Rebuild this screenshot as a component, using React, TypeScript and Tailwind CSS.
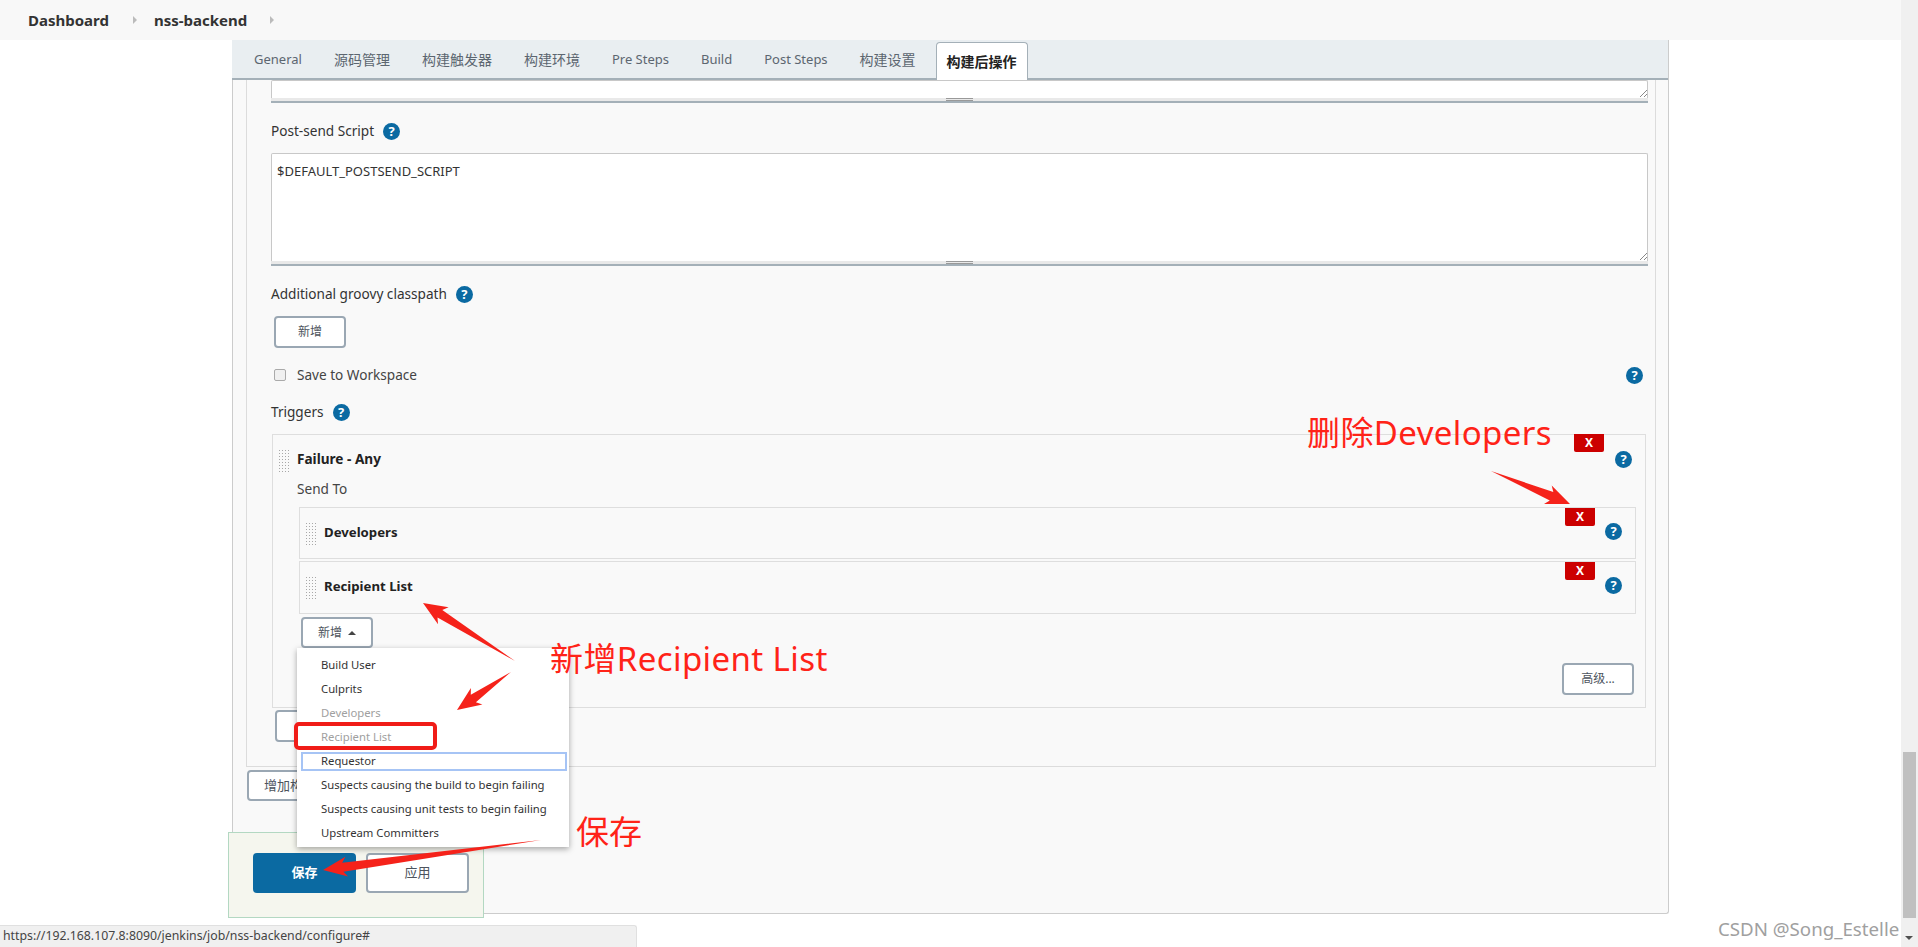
import React from "react";

const tabs = ["General", "源码管理", "构建触发器", "构建环境", "Pre Steps", "Build", "Post Steps", "构建设置"];

const menuItems = [
  { label: "Build User" },
  { label: "Culprits" },
  { label: "Developers", disabled: true },
  { label: "Recipient List", disabled: true },
  { label: "Requestor", focused: true },
  { label: "Suspects causing the build to begin failing" },
  { label: "Suspects causing unit tests to begin failing" },
  { label: "Upstream Committers" },
];

// tail -> tip arrow with a swept head, like the ones drawn on the screenshot
const arrowPoints = (x1: number, y1: number, x2: number, y2: number) => {
  const d = Math.hypot(x2 - x1, y2 - y1);
  const ux = (x2 - x1) / d;
  const uy = (y2 - y1) / d;
  const at = (along: number, side: number) =>
    `${(x1 + ux * along - uy * side).toFixed(1)},${(y1 + uy * along + ux * side).toFixed(1)}`;
  return [at(0, 0), at(d - 20, 4.5), at(d - 24, 10), at(d, 0), at(d - 24, -10), at(d - 20, -4.5)].join(" ");
};

const Help = ({ className = "" }: { className?: string }) => (
  <span
    className={`flex h-[17px] w-[17px] shrink-0 items-center justify-center rounded-full bg-[#0b6aa2] text-[13px] leading-none font-bold text-white ${className}`}
  >
    ?
  </span>
);

const Grip = () => <div className="h-[23px] w-[11px] shrink-0 bg-[radial-gradient(#a8a8a8_1px,transparent_1px)] bg-[length:3px_3px]" />;

const DeleteButton = ({ className }: { className: string }) => (
  <button className={`absolute flex h-[18px] w-[30px] items-center justify-center rounded-b-[2px] bg-[#cc0000] text-[12px] leading-none font-bold text-white ${className}`}>
    X
  </button>
);

const Button = ({ children, className }: { children: React.ReactNode; className: string }) => (
  <button className={`flex items-center justify-center rounded-[4px] border-2 border-[#9aa7b3] bg-white text-[12px] text-[#4d545d] ${className}`}>
    {children}
  </button>
);

const ScriptBox = ({ text, className }: { text?: string; className: string }) => (
  <div className="relative">
    <div className={`rounded-t-[2px] border border-b-0 border-[#c8c8c8] bg-white px-[5px] pt-[7px] text-[13px] leading-5 text-[#333] ${className}`}>
      {text}
    </div>
    <div className="flex h-[5px] items-center justify-center border-b-2 border-[#a4b0b8] bg-[#e9e9e9]">
      <div className="h-[3px] w-[27px] border-y border-[#999]" />
    </div>
    <svg className="absolute right-[1px] bottom-[6px] h-2 w-2" viewBox="0 0 8 8">
      <path d="M1 8 8 1M5 8 8 5" stroke="#888" strokeWidth="1" />
    </svg>
  </div>
);

const SendToBox = ({ title, className }: { title: string; className: string }) => (
  <div className={`relative flex items-center gap-2 border border-[#dedede] pl-[5px] ${className}`}>
    <Grip />
    <span className="-mt-px text-[13.2px] font-bold text-[#222]">{title}</span>
    <DeleteButton className="top-0 right-[40px]" />
    <Help className="absolute top-[15px] right-[13px]" />
  </div>
);

export default function App() {
  return (
    <div className="relative flex h-[947px] w-[1918px] overflow-hidden bg-white font-['Noto_Sans','Noto_Sans_CJK_SC',sans-serif] text-[13.6px] text-[#333]">
      <div className="flex w-[1901px] flex-col">
        <header className="flex h-10 shrink-0 items-center bg-[#f8f8f8] pl-[28px] text-[15px] font-bold text-[#333]">
          <span>Dashboard</span>
          <span className="ml-[24px] h-0 w-0 border-y-[4px] border-l-[4px] border-y-transparent border-l-[#bbb]" />
          <span className="ml-[17px]">nss-backend</span>
          <span className="ml-[23px] h-0 w-0 border-y-[4px] border-l-[4px] border-y-transparent border-l-[#bbb]" />
        </header>

        <div className="ml-[232px] flex h-[874px] w-[1437px] flex-col rounded-b-[3px] border-x border-b border-[#ccc] bg-[#f9f9f9]">
          <nav className="-ml-px flex h-10 shrink-0 items-end gap-[32px] border-b-2 border-[#a4b0b8] bg-[#e9eef1] pl-[22px] text-[13px] text-[#5c6670]">
            {tabs.map((tab) => (
              <span key={tab} className={`flex h-[37px] items-center ${/[a-z]/i.test(tab) ? "" : "text-[14px]"}`}>
                {tab}
              </span>
            ))}
            <span className="-mb-[2px] -ml-[12px] flex h-[38px] w-[92px] items-center justify-center rounded-t-[4px] border border-b-0 border-[#a4b0b8] bg-white text-[14px] font-bold text-[#222]">
              构建后操作
            </span>
          </nav>

          <section className="ml-[13px] h-[687px] w-[1410px] shrink-0 border-x border-b border-[#dcdcdc] pr-[7px] pl-6">
            <ScriptBox className="h-[18px]" />

            <div className="mt-[18px] flex h-5 items-center gap-[9px]">
              <span>Post-send Script</span>
              <Help />
            </div>
            <div className="mt-3">
              <ScriptBox text="$DEFAULT_POSTSEND_SCRIPT" className="h-[108px]" />
            </div>

            <div className="mt-[18px] flex h-5 items-center gap-[9px]">
              <span>Additional groovy classpath</span>
              <Help />
            </div>
            <Button className="mt-3 ml-[3px] h-8 w-[72px]">新增</Button>

            <div className="mt-[17px] ml-[3px] flex h-5 items-center">
              <span className="h-3 w-3 rounded-[2px] border border-[#aaa] bg-[#f0f0f0]" />
              <span className="ml-[11px] text-[#444]">Save to Workspace</span>
              <Help className="mr-[5px] ml-auto" />
            </div>

            <div className="mt-[17px] flex h-5 items-center gap-[9px]">
              <span>Triggers</span>
              <Help />
            </div>

            <div className="relative mt-3 mr-[2px] ml-px h-[274px] border border-[#dedede] pt-[14px] pl-[5px]">
              <DeleteButton className="-top-px right-[41px]" />
              <Help className="absolute top-4 right-[13px]" />
              <div className="flex gap-2">
                <Grip />
                <span className="leading-5 font-bold text-[#222]">Failure - Any</span>
              </div>
              <div className="mt-[7px] ml-[19px] flex h-5 items-center text-[#444]">Send To</div>
              <SendToBox title="Developers" className="mt-[8px] ml-[21px] h-[52px] w-[1337px]" />
              <SendToBox title="Recipient List" className="mt-[2px] ml-[21px] h-[53px] w-[1337px]" />
              <Button className="mt-[3px] ml-[23px] h-[31px] w-[72px] gap-[6px]">
                新增
                <span className="h-0 w-0 border-x-[4px] border-b-[4px] border-x-transparent border-b-[#444]" />
              </Button>
              <Button className="absolute right-[11px] bottom-[12px] h-[32px] w-[72px]">高级...</Button>
            </div>
            <Button className="mt-[2px] ml-[4px] h-8 w-[72px]">新增</Button>
          </section>

          <Button className="mt-[3px] ml-[14px] h-[31px] w-[151px] shrink-0 text-[13px]">增加构建后操作步骤</Button>
        </div>
      </div>

      <div className="relative w-[17px] shrink-0 bg-[#f0f0f0]">
        <div className="absolute top-[752px] left-[2px] h-[166px] w-[13px] bg-[#c0c0c0]" />
        <span className="absolute bottom-[7px] left-[4px] h-0 w-0 border-x-[4px] border-t-[4px] border-x-transparent border-t-[#505050]" />
      </div>

      {/* sticky save bar */}
      <div className="absolute top-[832px] left-[228px] flex h-[86px] w-[256px] items-start gap-[10px] border border-[#b3d8c2] bg-[#f5f6ee] pt-[20px] pl-[24px]">
        <button className="flex h-10 w-[103px] items-center justify-center rounded-[4px] bg-[#0b6aa2] text-[13px] font-bold text-white">保存</button>
        <Button className="h-10 w-[103px] text-[13px]">应用</Button>
      </div>

      {/* dropdown opened from the 新增 button */}
      <ul className="absolute top-[648px] left-[297px] h-[199px] w-[272px] bg-white py-[5px] text-[11.3px] text-[#333] shadow-[0_2px_6px_rgba(0,0,0,0.35)]">
        {menuItems.map((item) => (
          <li key={item.label} className="flex h-6 items-center pr-[2px] pl-[4px]">
            <span
              className={`flex h-[19px] w-full items-center ${item.focused ? "border-2 border-[#a6c4f5] pl-[18px]" : "pl-5"} ${item.disabled ? "text-[#a0a0a0]" : ""}`}
            >
              {item.label}
            </span>
          </li>
        ))}
      </ul>

      <div className="absolute bottom-0 left-0 flex h-[22px] w-[637px] items-center rounded-tr-[3px] border-t border-r border-[#e0e0e0] bg-[#f0f0f0] pl-[3px] text-[12.3px] text-[#444]">
        https://192.168.107.8:8090/jenkins/job/nss-backend/configure#
      </div>

      <div className="absolute top-[917px] left-[1718px] bg-white/70 text-[18.7px] leading-6 text-[#a0a0a0]">CSDN @Song_Estelle</div>

      {/* red annotations drawn on the screenshot */}
      <span className="absolute top-[413px] left-[1307px] text-[33px] leading-10 tracking-[0.4px] whitespace-nowrap text-[#ff2318]">删除Developers</span>
      <span className="absolute top-[639px] left-[550px] text-[33px] leading-10 tracking-[0.4px] whitespace-nowrap text-[#ff2318]">新增Recipient List</span>
      <span className="absolute top-[812px] left-[576px] text-[33px] leading-10 whitespace-nowrap text-[#ff2318]">保存</span>
      <div className="absolute top-[722px] left-[294px] h-[28px] w-[143px] rounded-[5px] border-[4px] border-[#f01c18]" />
      <svg className="absolute top-0 left-0 h-[947px] w-[1918px]" viewBox="0 0 1918 947" fill="#f5221a">
        <polygon points={arrowPoints(1491, 471, 1570, 504)} />
        <polygon points={arrowPoints(515, 661, 423, 603)} />
        <polygon points={arrowPoints(511, 672, 457, 710)} />
        <polygon points={arrowPoints(541, 840, 323, 870)} />
      </svg>
    </div>
  );
}
